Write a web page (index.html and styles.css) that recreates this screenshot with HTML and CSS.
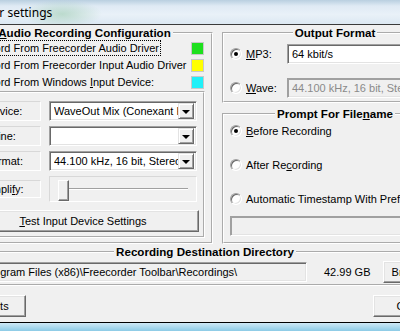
FILE: index.html
```html
<!DOCTYPE html>
<html lang="en">
<head>
    <meta charset="UTF-8">
    <meta name="viewport" content="width=device-width, initial-scale=1.0">
    <title>Freecorder settings</title>
    <link rel="stylesheet" href="styles.css">
</head>
<body>
    <div class="window">
        <div class="titlebar"><span class="caption">Freecorder settings</span></div>
        <div class="client">
            <div class="dialog">
                <div class="columns">
                    <fieldset class="group audio">
                        <legend><u>A</u>udio Recording Configuration</legend>
                        <label class="source">
                            <span class="radio checked"></span>
                            <span class="source-text focused">Record From Freecorder Audio Driver</span>
                            <span class="swatch green"></span>
                        </label>
                        <label class="source">
                            <span class="radio"></span>
                            <span class="source-text">Record From Freecorder Input Audio Driver</span>
                            <span class="swatch yellow"></span>
                        </label>
                        <label class="source">
                            <span class="radio"></span>
                            <span class="source-text">Record From Windows <u>I</u>nput Device:</span>
                            <span class="swatch cyan"></span>
                        </label>

                        <fieldset class="group device">
                            <div class="field">
                                <span class="field-label">Device:</span>
                                <div class="combo">
                                    <span class="combo-text">WaveOut Mix (Conexant HD Audio)</span>
                                    <span class="combo-arrow"></span>
                                </div>
                            </div>
                            <div class="field">
                                <span class="field-label">Line:</span>
                                <div class="combo">
                                    <span class="combo-text"></span>
                                    <span class="combo-arrow"></span>
                                </div>
                            </div>
                            <div class="field">
                                <span class="field-label">Format:</span>
                                <div class="combo">
                                    <span class="combo-text">44.100 kHz, 16 bit, Stereo</span>
                                    <span class="combo-arrow"></span>
                                </div>
                            </div>
                            <div class="field slider-field">
                                <span class="field-label">Ampli<u>f</u>y:</span>
                                <div class="slider">
                                    <span class="slider-track"></span>
                                    <span class="slider-thumb"></span>
                                </div>
                            </div>
                            <button class="btn test"><u>T</u>est Input Device Settings</button>
                        </fieldset>
                    </fieldset>

                    <div class="side">
                        <fieldset class="group output">
                            <legend>Output Format</legend>
                            <div class="option-row">
                                <span class="radio checked"></span>
                                <span class="option-label"><u>M</u>P3:</span>
                                <div class="textbox">64 kbit/s</div>
                            </div>
                            <div class="option-row">
                                <span class="radio"></span>
                                <span class="option-label"><u>W</u>ave:</span>
                                <div class="textbox disabled">44.100 kHz, 16 bit, Stereo</div>
                            </div>
                        </fieldset>

                        <fieldset class="group prompt">
                            <legend>Prompt For File<u>n</u>ame</legend>
                            <label class="choice"><span class="radio checked"></span><u>B</u>efore Recording</label>
                            <label class="choice"><span class="radio"></span>After Re<u>c</u>ording</label>
                            <label class="choice"><span class="radio"></span>Automatic Timestamp With Prefix:</label>
                            <div class="textbox disabled prefix"></div>
                        </fieldset>
                    </div>
                </div>

                <fieldset class="group dest">
                    <legend>Recording Destination Directory</legend>
                    <div class="dest-row">
                        <div class="textbox readonly path">C:\Program Files (x86)\Freecorder Toolbar\Recordings\</div>
                        <span class="free-space">42.99 GB</span>
                        <button class="btn browse">Browse...</button>
                    </div>
                </fieldset>

                <div class="actions">
                    <button class="btn defaults">Defaults</button>
                    <button class="btn close">Close</button>
                </div>
            </div>
        </div>
        <div class="frame-bottom"></div>
    </div>
</body>
</html>
```

FILE: styles.css
```css
* {
    box-sizing: border-box;
}
body {
    margin: 0;
    font-family: "Liberation Sans", Arial, sans-serif;
    font-size: 11px;
    color: #000;
    background-color: #f0f0f0;
    overflow: hidden;
}
u {
    text-decoration: underline;
}
.window {
    width: 400px;
    height: 331px;
    display: flex;
    flex-direction: column;
    overflow: hidden;
}

/* window frame */
.titlebar {
    height: 25px;
    flex: none;
    display: flex;
    align-items: center;
    border-bottom: 1px solid #3a3a3a;
    background:
        radial-gradient(ellipse 40px 14px at 62px 14px, rgba(150, 200, 170, 0.55), rgba(150, 200, 170, 0)),
        linear-gradient(to bottom, #b9cfe0 0, #dfeaf4 25%, #e9f1f8 60%, #dce8f2 100%);
    overflow: hidden;
}
.caption {
    font-family: "Noto Sans", sans-serif;
    font-size: 12px;
    margin-left: -57px;
    white-space: nowrap;
}
.client {
    flex: 1;
    border-bottom: 1px solid #000;
    overflow: hidden;
}
.frame-bottom {
    height: 8px;
    flex: none;
    background: linear-gradient(to bottom, #cfe9f6, #8ccbe6);
}
.dialog {
    width: 508px;
    margin-left: -52px;
    padding: 1px 8px 0;
}
.columns {
    display: grid;
    grid-template-columns: 257px 226px;
    column-gap: 9px;
}

/* group boxes */
.group {
    margin: 0;
    padding: 0;
    border: 2px groove #fff;
    min-width: 0;
}
.group legend {
    margin: 0 auto;
    padding: 0 2px;
    font-weight: bold;
    font-size: 11.6px;
    line-height: 14px;
}
.audio {
    padding: 0 0 4px;
}
.source {
    display: flex;
    align-items: center;
    height: 16px;
    margin-bottom: 1px;
    padding-left: 1px;
    white-space: nowrap;
}
.source .radio {
    margin-right: 3px;
}
.source-text {
    padding: 1px 1px;
}
.source-text.focused {
    outline: 1px dotted #000;
    outline-offset: 0;
}
.swatch {
    width: 13px;
    height: 13px;
    margin-left: auto;
    margin-right: 7px;
    border: 1px solid #c8c8c8;
}
.swatch.green {
    background-color: #1ee01e;
}
.swatch.yellow {
    background-color: #ffff00;
}
.swatch.cyan {
    background-color: #20f0f8;
}

.device {
    margin: 1px 6px 0 2px;
    padding: 8px 6px 4px 5px;
}
.field {
    display: flex;
    gap: 8px;
    height: 20px;
    margin-bottom: 5px;
}
.field-label {
    width: 74px;
    flex: none;
    display: flex;
    align-items: center;
    justify-content: center;
    border: 1px solid;
    border-color: #d8d8d8 #fff #fff #d8d8d8;
}
.combo {
    flex: 1;
    display: flex;
    align-items: center;
    background-color: #fff;
    border: 1px solid;
    border-color: #a0a0a0 #fff #fff #a0a0a0;
    box-shadow: inset 1px 1px 0 #696969, inset -1px -1px 0 #e3e3e3;
    padding: 2px 2px 2px 4px;
    min-width: 0;
}
.combo-text {
    flex: 1;
    overflow: hidden;
    white-space: nowrap;
}
.combo-arrow {
    width: 16px;
    height: 16px;
    flex: none;
    display: flex;
    align-items: center;
    justify-content: center;
    background-color: #f0f0f0;
    border: 1px solid;
    border-color: #e3e3e3 #696969 #696969 #e3e3e3;
    box-shadow: inset 1px 1px 0 #fff, inset -1px -1px 0 #a0a0a0;
}
.combo-arrow::after {
    content: "";
    border-left: 4px solid transparent;
    border-right: 4px solid transparent;
    border-top: 4px solid #000;
    margin-top: 1px;
}
.slider-field {
    height: 26px;
    margin-bottom: 8px;
}
.slider-field .field-label {
    height: 18px;
    align-self: center;
}
.slider {
    flex: 1;
    position: relative;
    display: flex;
    align-items: center;
    border: 1px solid;
    border-color: #d8d8d8 #fff #fff #d8d8d8;
}
.slider-track {
    flex: 1;
    height: 2px;
    margin: 0 8px 0 16px;
    border-top: 1px solid #a0a0a0;
    border-bottom: 1px solid #fff;
}
.slider-thumb {
    position: absolute;
    left: 8px;
    top: 3px;
    width: 11px;
    height: 21px;
    background-color: #f0f0f0;
    border: 1px solid;
    border-color: #fff #696969 #696969 #fff;
    box-shadow: inset -1px -1px 0 #a0a0a0;
}

/* buttons */
.btn {
    font: inherit;
    color: #000;
    height: 22px;
    padding: 0;
    background-color: #f0f0f0;
    border: 1px solid;
    border-color: #fff #696969 #696969 #fff;
    box-shadow: inset -1px -1px 0 #a0a0a0, inset 1px 1px 0 #e3e3e3;
    white-space: nowrap;
}
.test {
    display: block;
    width: 232px;
}

/* right column */
.side {
    display: flex;
    flex-direction: column;
    gap: 4px;
}
.output {
    padding: 4px 6px 3px;
}
.option-row {
    display: flex;
    align-items: center;
    height: 20px;
}
.option-row + .option-row {
    margin-top: 14px;
}
.option-row .radio {
    margin-right: 4px;
}
.option-label {
    width: 41px;
    flex: none;
}
.textbox {
    flex: 1;
    height: 20px;
    display: flex;
    align-items: center;
    padding: 0 4px;
    background-color: #fff;
    border: 1px solid;
    border-color: #a0a0a0 #fff #fff #a0a0a0;
    box-shadow: inset 1px 1px 0 #696969, inset -1px -1px 0 #e3e3e3;
    white-space: nowrap;
    overflow: hidden;
    min-width: 0;
}
.textbox.disabled {
    background-color: #f0f0f0;
    color: #8a8a8a;
    box-shadow: inset 1px 1px 0 #a0a0a0, inset -1px -1px 0 #e3e3e3;
}
.textbox.readonly {
    background-color: #f0f0f0;
}
.prompt {
    flex: 1;
    padding: 2px 6px 0;
}
.choice {
    display: flex;
    align-items: center;
    height: 16px;
    white-space: nowrap;
}
.choice + .choice {
    margin-top: 18px;
}
.choice .radio {
    margin-right: 4px;
}
.prefix {
    flex: none;
    margin-top: 9px;
}

/* radio buttons */
.radio {
    width: 12px;
    height: 12px;
    flex: none;
    display: inline-flex;
    align-items: center;
    justify-content: center;
    border-radius: 50%;
    background-color: #fff;
    border: 1px solid;
    border-color: #a0a0a0 #fff #fff #a0a0a0;
    box-shadow: inset 1px 1px 0 #696969, inset -1px -1px 0 #e3e3e3;
}
.radio.checked::after {
    content: "";
    width: 4px;
    height: 4px;
    border-radius: 50%;
    background-color: #000;
}

/* destination */
.dest {
    margin-top: 1px;
    padding: 2px 0 1px 6px;
}
.dest-row {
    display: flex;
    align-items: center;
}
.path {
    flex: none;
    width: 343px;
}
.free-space {
    margin-left: 17px;
}
.browse {
    width: 63px;
    margin-left: auto;
}

/* bottom buttons */
.actions {
    display: flex;
    justify-content: space-between;
    margin-top: 9px;
}
.defaults {
    width: 75px;
    margin-left: -5px;
}
.close {
    width: 75px;
}
```
